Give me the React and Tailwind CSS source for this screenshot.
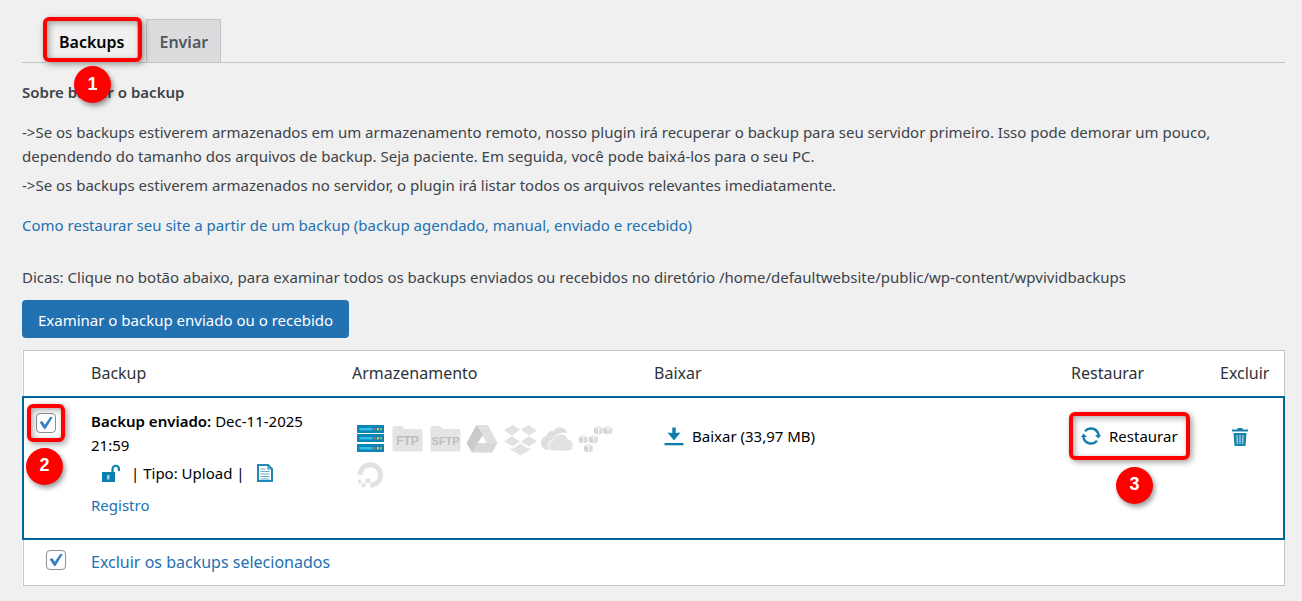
import React, { useState } from "react";

const Marker = ({ number, className }) => (
  <span
    className={`absolute z-10 flex h-[37px] w-[37px] items-center justify-center rounded-full bg-[#fe0000] pb-0.5 font-['Liberation_Sans'] text-lg leading-5 font-bold text-white shadow-[2px_3px_5px_rgba(0,0,0,0.4)] ${className}`}
  >
    {number}
  </span>
);

const Highlight = ({ className }) => (
  <span
    className={`pointer-events-none absolute rounded-md border-4 border-[#fe0000] shadow-[2px_2px_6px_rgba(0,0,0,0.4),inset_2px_2px_6px_rgba(0,0,0,0.35)] ${className}`}
  />
);

const Checkbox = ({ label, checked, onChange }) => (
  <span className="grid h-5 w-5">
    <input
      type="checkbox"
      aria-label={label}
      checked={checked}
      onChange={onChange}
      className="peer col-start-1 row-start-1 h-5 w-5 appearance-none rounded border border-[#8c8f94] bg-white"
    />
    <svg viewBox="0 0 20 20" className="pointer-events-none invisible col-start-1 row-start-1 h-5 w-5 peer-checked:visible">
      <path d="M3.6 9.2 6.2 8l2.600 3.700L14.500 3.800l2.200.4L9.500 16H8.200z" fill="#3582c4" />
    </svg>
  </span>
);

const ServerIcon = () => (
  <svg viewBox="0 0 37 37" className="h-[37px] w-[37px]">
    {[5, 14, 24].map((y) => (
      <g key={y}>
        <rect x="5" y={y} width="27" height="8" fill="#0d86b5" />
        <rect x="7.5" y={y + 3} width="13" height="2.4" fill="#2fc0e6" />
        <rect x="21.5" y={y + 3} width="2" height="2.4" fill="#b56a78" />
        <rect x="25" y={y + 3} width="2" height="2.4" fill="#d9c56e" />
        <rect x="28" y={y + 3} width="2" height="2.4" fill="#7fb877" />
      </g>
    ))}
  </svg>
);

const FolderIcon = ({ text, size }) => (
  <svg viewBox="0 0 37 37" className="h-[37px] w-[37px]">
    <path d="M3.5 8q0-2 2-2h7q1 0 2 1.500l1 1.500H31.500q2 0 2 2V30q0 1.500-1.500 1.500H5q-1.500 0-1.500-1.500z" fill="#e4e4e4" />
    <text x="18.500" y="24.500" textAnchor="middle" fontSize={size} fontWeight="bold" fontFamily="Liberation Sans" fill="#bdbdbd">
      {text}
    </text>
  </svg>
);

const DriveIcon = () => (
  <svg viewBox="0 0 37 37" className="h-[37px] w-[37px]">
    <path d="M12.500 5H24l9.500 18H22.500L18.500 15z" fill="#e0e0e0" />
    <path d="M12.500 5 2.500 23l5.500 9.500 11-18z" fill="#cacaca" />
    <path d="M13.500 23h20L28 32.500H8z" fill="#d8d8d8" />
  </svg>
);

const DropboxIcon = () => (
  <svg viewBox="0 0 37 37" className="h-[37px] w-[37px]" fill="#e2e2e2">
    <path d="M10.500 5l7.500 4.800-8 5.700-8-5z" />
    <path d="M26.500 5L19 9.800l8 5.700 8-5z" />
    <path d="M10 16l8 5.700-7.500 4.800-8.500-5.300z" />
    <path d="M27 16l-8 5.700 7.500 4.800 8.500-5.300z" />
    <path d="M8.500 28l2.300 1 7.700-5.500 7.700 5.500 2.300-1v1.500l-10 6-10-6z" />
  </svg>
);

const OneDriveIcon = () => (
  <svg viewBox="0 0 37 37" className="h-[37px] w-[37px]">
    <path d="M9 30Q2 29 2 22.500q0-5.500 5.500-6.500 1-5.500 7-5 3-4.500 8-3.500 4.500 1 5.500 5.500-8-2-10 5-7.500 1-7.500 7.500 0 3 1.500 5z" fill="#dedede" />
    <path d="M15 31q-5.500-.5-5.500-5.500 0-5 5-5.500 1-6 7.500-6 5 0 7 5.500 5 0 5 5.500 0 6-5 6z" fill="#e2e2e2" stroke="#fff" />
  </svg>
);

// isometric boxes, top-left corner of each
const cubes = [
  [17, 6],
  [26.5, 6],
  [2, 15],
  [12, 15],
  [7, 24],
];

const AmazonIcon = () => (
  <svg viewBox="0 0 37 37" className="h-[37px] w-[37px]">
    {cubes.map(([x, y]) => (
      <g key={`${x}-${y}`} transform={`translate(${x} ${y})`}>
        <path d="M0 1.800l4 .7v6L0 7z" fill="#d4d4d4" />
        <path d="M4.800 2.500l4-.7V7l-4 1.500z" fill="#dcdcdc" />
        <path d="M.3 1 4.400 0l4.100 1-4.100.8z" fill="#e4e4e4" />
      </g>
    ))}
  </svg>
);

const DigitalOceanIcon = () => (
  <svg viewBox="0 0 37 37" className="h-[37px] w-[37px]">
    <path d="M8 18a10.300 10.300 0 1 1 10.300 10.300" fill="none" stroke="#e2e2e2" strokeWidth="5" />
    <path d="M13.500 21.500h4.800v4.800h-4.800zM9.500 26.300h4v4h-4zM6 22.800h3.500v3.500H6z" fill="#e2e2e2" />
  </svg>
);

const UnlockIcon = () => (
  <svg viewBox="0 0 20 20" className="h-5 w-5">
    <path d="M11.500 10V6a3.200 3.200 0 0 1 6.500 0V8" fill="none" stroke="#0d7fae" strokeWidth="2.200" />
    <rect x="1" y="9" width="13" height="10" fill="#0d7fae" />
    <path d="M6 12h2.500v4.500H6z" fill="#9bd3e8" />
  </svg>
);

const LogIcon = () => (
  <svg viewBox="0 0 20 20" className="h-5 w-5" fill="none" stroke="#2189b4">
    <path d="M3 2h10l4 4v12H3z" strokeWidth="2" />
    <path d="M13 2v4h4" strokeWidth="1.200" />
    <path d="M5.500 6h5M5.500 8.500h9M5.500 11h9M5.500 13.500h9M5.500 16h9" stroke="#5eaccc" />
  </svg>
);

const DownloadIcon = () => (
  <svg viewBox="0 0 20 20" className="h-5 w-5" fill="#0d7fae">
    <path d="M8.300 1.500h3.400V7l4.800-.5L10 14.500 3.500 6.500l4.800.5z" />
    <path d="M.5 17h19v2.300H.5z" />
  </svg>
);

const RestoreIcon = () => (
  <svg viewBox="0 0 20 20" className="h-5 w-5" fill="none" stroke="#1680ab" strokeWidth="2.400">
    <path d="M4 5.200A7.800 7.800 0 0 1 17.600 9" />
    <path d="M16 14.800A7.800 7.800 0 0 1 2.400 11" />
    <path d="M14 9h6L17.500 12.500zM0 11h6L2.500 7.500z" fill="#1680ab" stroke="none" />
  </svg>
);

const TrashIcon = () => (
  <svg viewBox="0 0 20 20" className="h-5 w-5">
    <path d="M7.500 1h5v1.500H18v2H2v-2h5.500zM3.500 6h13l-1 13h-11z" fill="#1680ab" />
    <path d="M7 8l.3 9M10 8v9M13 8l-.3 9" stroke="#b5dcea" strokeWidth="1.200" />
  </svg>
);

const App = () => {
  const [rowChecked, setRowChecked] = useState(true);
  const [allChecked, setAllChecked] = useState(true);

  return (
    <div className="min-h-screen bg-[#f0f0f0] pt-[19px] pr-[17px] pb-[15px] pl-[22px] font-['Noto_Sans',sans-serif] text-[15px] leading-6 text-[#3c434a]">
      <nav className="flex gap-2 border-b border-[#c3c4c7] pl-[23px] text-base font-semibold">
        <a href="#backups" className="relative -mb-px border border-[#c3c4c7] border-b-[#f0f0f0] bg-[#f0f0f0] px-[13px] pt-2.5 pb-2 text-black">
          Backups
          <Highlight className="-top-[3px] -right-[5px] bottom-0 -left-[3px]" />
          <Marker number="1" className="top-[46px] left-[28px]" />
        </a>
        <a href="#enviar" className="border border-b-0 border-[#c3c4c7] bg-[#dcdcde] px-3 pt-2.5 pb-2 text-[#50575e]">
          Enviar
        </a>
      </nav>

      <main>
        <h2 className="mt-[17px] font-semibold">Sobre baixar o backup</h2>
        <p className="mt-4">
          -&gt;Se os backups estiverem armazenados em um armazenamento remoto, nosso plugin irá recuperar o backup para seu servidor primeiro. Isso pode demorar um pouco, dependendo do tamanho dos arquivos de backup. Seja paciente. Em seguida, você pode baixá-los para o seu PC.
        </p>
        <p className="mt-[5px]">
          -&gt;Se os backups estiverem armazenados no servidor, o plugin irá listar todos os arquivos relevantes imediatamente.
        </p>
        <p className="mt-4">
          <a href="#ajuda" className="text-[#2271b1]">
            Como restaurar seu site a partir de um backup (backup agendado, manual, enviado e recebido)
          </a>
        </p>
        <p className="mt-7">
          Dicas: Clique no botão abaixo, para examinar todos os backups enviados ou recebidos no diretório /home/defaultwebsite/public/wp-content/wpvividbackups
        </p>
        <button type="button" className="mt-[11px] block h-[38px] rounded bg-[#2271b1] px-4 pt-0.5 text-white">
          Examinar o backup enviado ou o recebido
        </button>

        <table className="mt-3 w-full table-fixed border-collapse border border-[#c3c4c7] bg-white text-left text-black">
          <colgroup>
            <col className="w-[58px]" />
            <col className="w-[261px]" />
            <col className="w-[302px]" />
            <col />
            <col className="w-[149px]" />
            <col className="w-[74px]" />
          </colgroup>
          <thead>
            <tr className="h-[46px] text-base text-[#2c3338]">
              <td />
              <th className="px-2.5 font-normal">Backup</th>
              <th className="px-2.5 font-normal">Armazenamento</th>
              <th className="px-2.5 font-normal">Baixar</th>
              <th className="px-2.5 font-normal">Restaurar</th>
              <th className="px-2.5 font-normal">Excluir</th>
            </tr>
          </thead>
          <tbody>
            <tr className="h-[142px] border-2 border-[#006799] align-top">
              <td className="pt-[15px] pl-3">
                <div className="relative w-5">
                  <Checkbox label="Selecionar backup" checked={rowChecked} onChange={() => setRowChecked(!rowChecked)} />
                  <Highlight className="-inset-[9px]" />
                  <Marker number="2" className="top-[35px] -left-2.5" />
                </div>
              </td>
              <td className="px-2.5 pt-[11px]">
                <p>
                  <strong className="font-semibold">Backup enviado:</strong> <span>Dec-11-2025</span> <span>21:59</span>
                </p>
                <div className="mt-1 flex items-center pl-2.5">
                  <button type="button" aria-label="Desbloquear">
                    <UnlockIcon />
                  </button>
                  <span className="ml-2.5">| Tipo: Upload |</span>
                  <span className="ml-2.5">
                    <LogIcon />
                  </span>
                </div>
                <a href="#registro" className="mt-2 block text-[#2271b1]">
                  Registro
                </a>
              </td>
              <td className="pt-[22px] pl-2.5">
                <div className="grid w-[262px] grid-cols-7">
                  <ServerIcon />
                  <FolderIcon text="FTP" size={12} />
                  <FolderIcon text="SFTP" size={11} />
                  <DriveIcon />
                  <DropboxIcon />
                  <OneDriveIcon />
                  <AmazonIcon />
                  <DigitalOceanIcon />
                </div>
              </td>
              <td className="pt-[26px] pl-5">
                <button type="button" className="flex items-center gap-2">
                  <DownloadIcon />
                  Baixar (33,97 MB)
                </button>
              </td>
              <td className="pt-[26px] pl-5">
                <button type="button" className="relative flex items-center gap-2">
                  <RestoreIcon />
                  Restaurar
                  <Highlight className="-inset-x-3 -inset-y-3" />
                  <Marker number="3" className="top-[43px] left-[35px]" />
                </button>
              </td>
              <td className="pt-[29px] pl-5">
                <button type="button" aria-label="Excluir backup" className="block">
                  <TrashIcon />
                </button>
              </td>
            </tr>
          </tbody>
          <tfoot>
            <tr className="h-[47px]">
              <td className="pb-1 pl-[22px]">
                <Checkbox label="Selecionar todos" checked={allChecked} onChange={() => setAllChecked(!allChecked)} />
              </td>
              <td colSpan={5} className="px-2.5 text-base">
                <a href="#excluir" className="text-[#2271b1]">
                  Excluir os backups selecionados
                </a>
              </td>
            </tr>
          </tfoot>
        </table>
      </main>
    </div>
  );
};

export default App;
